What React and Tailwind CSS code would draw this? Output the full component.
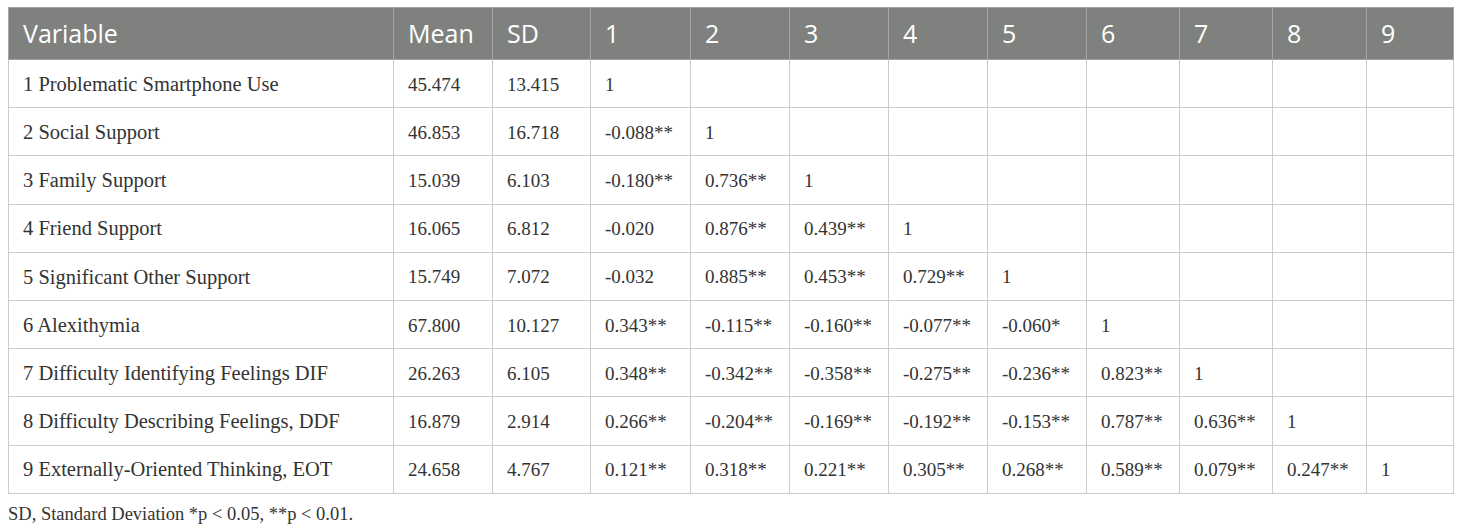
const headers = ["Variable", "Mean", "SD", "1", "2", "3", "4", "5", "6", "7", "8", "9"];
const colClasses = [
  "w-[385px]", "w-[99px]", "w-[98px]", "w-[100px]", "w-[99px]", "w-[99px]",
  "w-[99px]", "w-[99px]", "w-[93px]", "w-[93px]", "w-[94px]", "w-[87px]",
];

const rows = [
  ["1 Problematic Smartphone Use", "45.474", "13.415", "1"],
  ["2 Social Support", "46.853", "16.718", "-0.088**", "1"],
  ["3 Family Support", "15.039", "6.103", "-0.180**", "0.736**", "1"],
  ["4 Friend Support", "16.065", "6.812", "-0.020", "0.876**", "0.439**", "1"],
  ["5 Significant Other Support", "15.749", "7.072", "-0.032", "0.885**", "0.453**", "0.729**", "1"],
  ["6 Alexithymia", "67.800", "10.127", "0.343**", "-0.115**", "-0.160**", "-0.077**", "-0.060*", "1"],
  ["7 Difficulty Identifying Feelings DIF", "26.263", "6.105", "0.348**", "-0.342**", "-0.358**", "-0.275**", "-0.236**", "0.823**", "1"],
  ["8 Difficulty Describing Feelings, DDF", "16.879", "2.914", "0.266**", "-0.204**", "-0.169**", "-0.192**", "-0.153**", "0.787**", "0.636**", "1"],
  ["9 Externally-Oriented Thinking, EOT", "24.658", "4.767", "0.121**", "0.318**", "0.221**", "0.305**", "0.268**", "0.589**", "0.079**", "0.247**", "1"],
];

export default function App() {
  return (
    <div className="w-[1460px] h-[531px] bg-white pl-[8px] pt-[7px]">
      <table className="border-collapse table-fixed w-[1445px]">
        <colgroup>
          {colClasses.map((c, i) => (
            <col key={i} className={c} />
          ))}
        </colgroup>
        <thead>
          <tr className="h-[52px] bg-[#7f817f]">
            {headers.map((h, i) => (
              <th
                key={i}
                className="border border-[#a3a5a3] text-left font-normal text-white text-[25px] pl-[14px] leading-none font-['Open_Sans',sans-serif]"
              >
                {h}
              </th>
            ))}
          </tr>
        </thead>
        <tbody>
          {rows.map((r, ri) => (
            <tr key={ri} className="h-[48.2px]">
              {headers.map((_, ci) => (
                <td
                  key={ci}
                  className={
                    "border border-[#cccccc] text-left text-[#333333] pl-[14px] pt-[1px] leading-none whitespace-nowrap font-['Liberation_Serif',serif] " +
                    (ci === 0 ? "text-[20.5px]" : "text-[19px]")
                  }
                >
                  {r[ci] || ""}
                </td>
              ))}
            </tr>
          ))}
        </tbody>
      </table>
      <div className="mt-[11px] text-[18.5px] text-[#333333] leading-none font-['Liberation_Serif',serif]">
        SD, Standard Deviation *p &lt; 0.05, **p &lt; 0.01.
      </div>
    </div>
  );
}
